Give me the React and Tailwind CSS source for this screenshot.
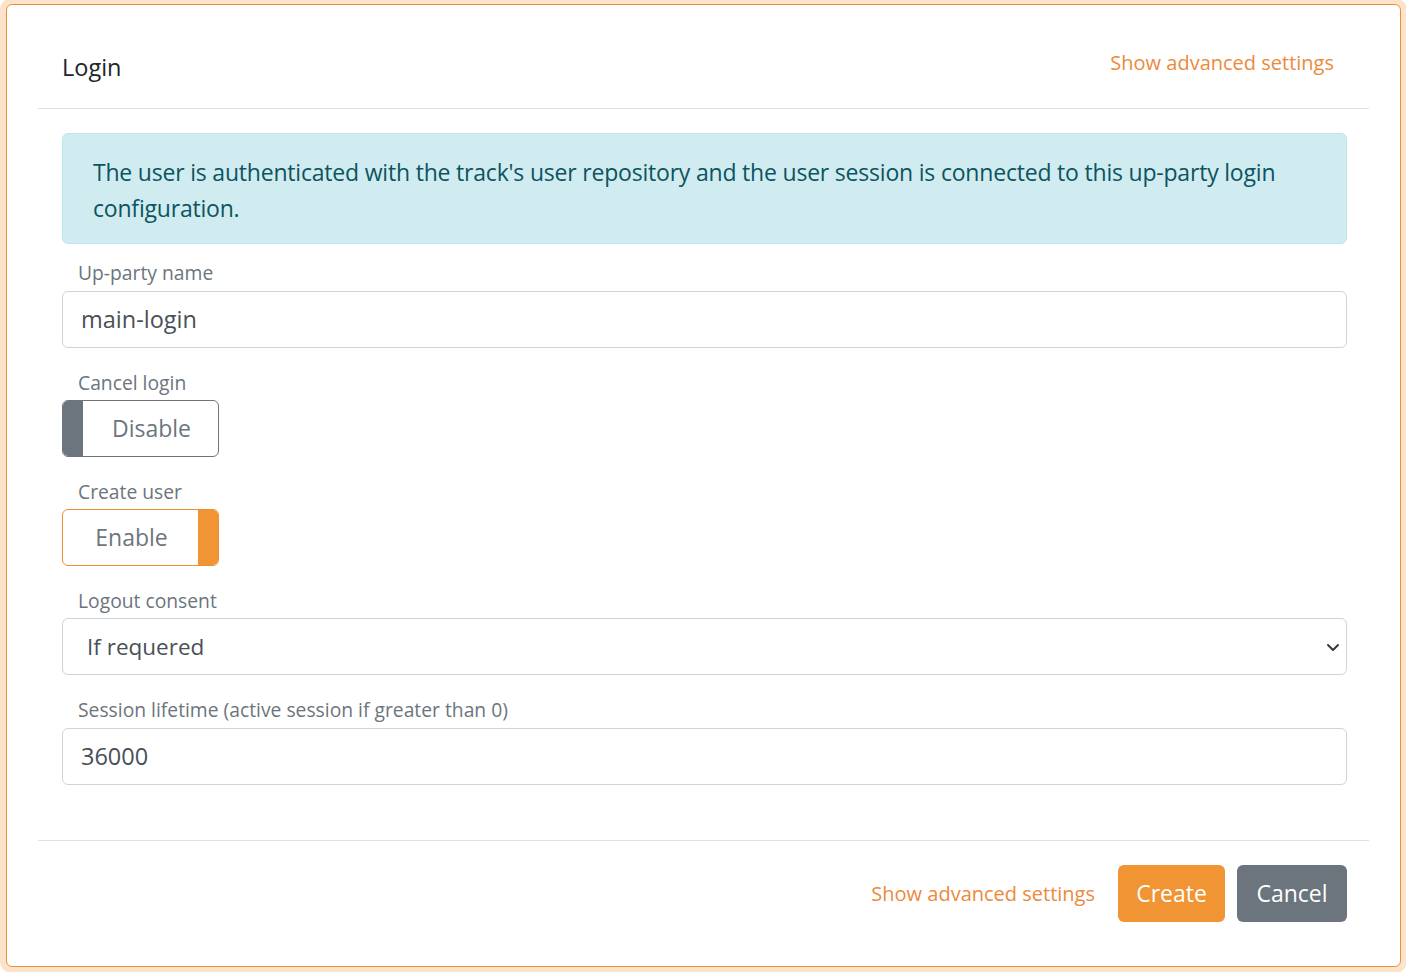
export default function App() {
  const font = { fontFamily: '"Open Sans", "Noto Sans", sans-serif' };
  return (
    <div className="min-h-[972px] w-[1406px] bg-white pt-[4px] pl-[6px]" style={font}>
      <div className="h-[963px] w-[1395px] rounded-[6px] border border-[#ef8f34] bg-white shadow-[0_0_0_6px_rgba(240,145,52,0.25)] px-[31px]">
        {/* header */}
        <div className="flex h-[104px] items-start justify-between border-b border-[#dee2e6] px-[24px]">
          <div className="mt-[44px] text-[23.5px] leading-[36px] text-[#212529]">Login</div>
          <div className="mt-[42px] mr-[11px] text-[20px] leading-[32px] text-[#ec8a3c]">Show advanced settings</div>
        </div>
        {/* body */}
        <div className="pl-[24px] pr-[22px] pt-[24px] pb-[55px]">
          <div className="rounded-[6px] border border-[#bee5eb] bg-[#d1ecf1] px-[30px] pt-[20px] pb-[17px] text-[23px] leading-[36px] tracking-[-0.2px] text-[#0c5460]">
            The user is authenticated with the track's user repository and the user session is connected to this up-party login configuration.
          </div>

          <div className="mt-[17px] pl-[16px] text-[19.3px] leading-[24px] text-[#6c757d]">Up-party name</div>
          <div className="mt-[6px] flex h-[57px] items-center rounded-[6px] border border-[#ced4da] px-[18px] text-[23.5px] text-[#495057]">main-login</div>

          <div className="mt-[23px] pl-[16px] text-[19.3px] leading-[24px] text-[#6c757d]">Cancel login</div>
          <div className="mt-[5px] flex h-[57px] w-[157px] items-center rounded-[6px] border border-[#6c757d]">
            <div className="h-full w-[20px] rounded-l-[5px] bg-[#6c757d]" />
            <div className="flex-1 pl-[2px] text-center text-[23px] text-[#6c757d]">Disable</div>
          </div>

          <div className="mt-[23px] pl-[16px] text-[19.3px] leading-[24px] text-[#6c757d]">Create user</div>
          <div className="mt-[5px] flex h-[57px] w-[157px] items-center rounded-[6px] border border-[#ef8f34]">
            <div className="flex-1 pl-[2px] text-center text-[23px] text-[#6c757d]">Enable</div>
            <div className="h-full w-[20px] rounded-r-[5px] bg-[#f19433]" />
          </div>

          <div className="mt-[23px] pl-[16px] text-[19.3px] leading-[24px] text-[#6c757d]">Logout consent</div>
          <div className="mt-[5px] flex h-[57px] items-center justify-between rounded-[6px] border border-[#ced4da] pl-[24px] pr-[5px] text-[22.5px] text-[#495057]">
            <span>If requered</span>
            <svg width="16" height="16" viewBox="0 0 16 16" fill="none">
              <path d="M3 6l5 5 5-5" stroke="#343a40" strokeWidth="2" strokeLinecap="round" strokeLinejoin="round" />
            </svg>
          </div>

          <div className="mt-[23px] pl-[16px] text-[19.3px] leading-[24px] text-[#6c757d]">Session lifetime (active session if greater than 0)</div>
          <div className="mt-[6px] flex h-[57px] items-center rounded-[6px] border border-[#ced4da] px-[18px] text-[23.5px] text-[#495057]">36000</div>
        </div>
        {/* footer */}
        <div className="flex items-center justify-end gap-[12px] border-t border-[#dee2e6] pl-[24px] pr-[22px] pt-[24px]">
          <span className="mr-[11px] text-[20px] text-[#ec8a3c]">Show advanced settings</span>
          <button className="h-[57px] w-[107px] rounded-[6px] bg-[#f19433] text-[23px] text-white">Create</button>
          <button className="h-[57px] w-[110px] rounded-[6px] bg-[#6c757d] text-[23px] text-white">Cancel</button>
        </div>
      </div>
    </div>
  );
}
